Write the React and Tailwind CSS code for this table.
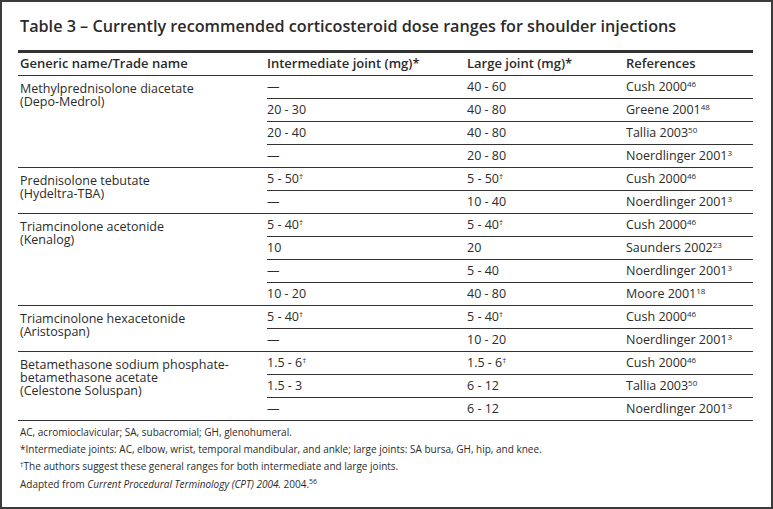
import React from 'react';

const groups = [
  {
    name: ['Methylprednisolone diacetate', '(Depo-Medrol)'],
    rows: [
      ['—', '40 - 60', 'Cush 2000', '46'],
      ['20 - 30', '40 - 80', 'Greene 2001', '48'],
      ['20 - 40', '40 - 80', 'Tallia 2003', '50'],
      ['—', '20 - 80', 'Noerdlinger 2001', '3'],
    ],
  },
  {
    name: ['Prednisolone tebutate', '(Hydeltra-TBA)'],
    rows: [
      ['5 - 50†', '5 - 50†', 'Cush 2000', '46'],
      ['—', '10 - 40', 'Noerdlinger 2001', '3'],
    ],
  },
  {
    name: ['Triamcinolone acetonide', '(Kenalog)'],
    rows: [
      ['5 - 40†', '5 - 40†', 'Cush 2000', '46'],
      ['10', '20', 'Saunders 2002', '23'],
      ['—', '5 - 40', 'Noerdlinger 2001', '3'],
      ['10 - 20', '40 - 80', 'Moore 2001', '18'],
    ],
  },
  {
    name: ['Triamcinolone hexacetonide', '(Aristospan)'],
    rows: [
      ['5 - 40†', '5 - 40†', 'Cush 2000', '46'],
      ['—', '10 - 20', 'Noerdlinger 2001', '3'],
    ],
  },
  {
    name: ['Betamethasone sodium phosphate-', 'betamethasone acetate', '(Celestone Soluspan)'],
    rows: [
      ['1.5 - 6†', '1.5 - 6†', 'Cush 2000', '46'],
      ['1.5 - 3', '6 - 12', 'Tallia 2003', '50'],
      ['—', '6 - 12', 'Noerdlinger 2001', '3'],
    ],
  },
];

// dose value, dagger pulled up as a superscript
const Dose = ({ value }) => {
  if (value.endsWith('†')) {
    return (
      <span>
        {value.slice(0, -1)}
        <span className="relative -top-[4px] text-[8px]">†</span>
      </span>
    );
  }
  return <span>{value}</span>;
};

const Ref = ({ label, num }) => (
  <span>
    {label}
    <span className="relative -top-[4px] text-[8px]">{num}</span>
  </span>
);

export default function App() {
  return (
    <div
      className="w-[773px] h-[509px] bg-white border-2 border-[#3c3c3c] text-[#2b2b2b] overflow-hidden"
      style={{ fontFamily: '"Open Sans", "Noto Sans", sans-serif' }}
    >
      <div className="pl-[16px] pr-[18px]">
        {/* Titre */}
        <h1 className="pt-[13px] pl-[2px] text-[16.2px] leading-[22px] font-semibold text-[#2b2b2b]">
          Table 3 – Currently recommended corticosteroid dose ranges for shoulder injections
        </h1>

        {/* Tableau */}
        <div className="mt-[13px] border-t-[3px] border-[#333]">
          <div className="flex h-[23px] items-center border-b border-[#333] text-[13px] font-semibold">
            <div className="w-[249px] pl-[2px]">Generic name/Trade name</div>
            <div className="w-[200px]">Intermediate joint (mg)*</div>
            <div className="w-[159px]">Large joint (mg)*</div>
            <div className="flex-1">References</div>
          </div>

          {groups.map((group, gi) => (
            <div key={gi} className="flex border-b border-[#333] text-[12.5px]">
              <div className="w-[249px] pl-[2px] pt-[6px] leading-[13px]">
                {group.name.map((line, li) => (
                  <div key={li}>{line}</div>
                ))}
              </div>
              <div className="flex-1">
                {group.rows.map((row, ri) => {
                  const last = ri === group.rows.length - 1;
                  return (
                    <div
                      key={ri}
                      className={last ? 'flex h-[22px] items-center' : 'flex h-[23px] items-center border-b border-[#333]'}
                    >
                      <div className="w-[200px]">
                        <Dose value={row[0]} />
                      </div>
                      <div className="w-[159px]">
                        <Dose value={row[1]} />
                      </div>
                      <div className="flex-1">
                        <Ref label={row[2]} num={row[3]} />
                      </div>
                    </div>
                  );
                })}
              </div>
            </div>
          ))}
        </div>

        {/* Notes */}
        <div className="pt-[3px] pl-[2px] text-[10px] leading-[17px]">
          <p>AC, acromioclavicular; SA, subacromial; GH, glenohumeral.</p>
          <p>*Intermediate joints: AC, elbow, wrist, temporal mandibular, and ankle; large joints: SA bursa, GH, hip, and knee.</p>
          <p>
            <span className="relative -top-[3px] text-[7px]">†</span>The authors suggest these general ranges for both intermediate and large joints.
          </p>
          <p>
            Adapted from <em>Current Procedural Terminology (CPT) 2004.</em> 2004.
            <span className="relative -top-[4px] text-[7px]">56</span>
          </p>
        </div>
      </div>
    </div>
  );
}
